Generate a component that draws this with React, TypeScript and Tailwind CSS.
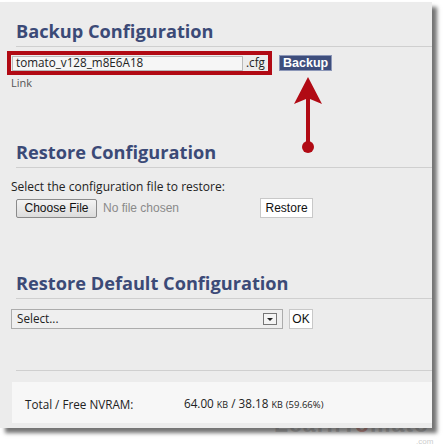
import React from "react";

const head = "font-['Open_Sans',sans-serif] font-bold text-[18.2px] leading-[24px] text-[#3b4a77]";
const os = "font-['Open_Sans',sans-serif]";
const ar = "font-['Liberation_Sans',Arial,sans-serif]";

export default function App() {
  return (
    <div className="relative w-[447px] h-[445px] bg-white overflow-hidden">
      {/* watermark (behind the panel shadow) */}
      <div className={`absolute left-[274px] top-[417px] ${ar} font-bold text-[23px] leading-[14px] tracking-[1px] text-[#cfcfcf] opacity-80`}>
        LearnT<span className="text-[#e5a097]">o</span>mato
      </div>
      <div className={`absolute left-[416px] top-[438px] ${ar} text-[8px] leading-[8px] text-[#cdcdcd]`}>.com</div>

      <div className={`relative mt-[2px] w-[432px] h-[426px] bg-[#ececec] shadow-[5px_5px_4px_rgba(0,0,0,0.55)] ${os}`}>
        {/* Backup */}
        <div className="pt-[17px] ml-[16px] border-b border-[#cfcfcf] pb-[3px]">
          <div className={head}>Backup Configuration</div>
        </div>
        <div className="flex items-center mt-[4px] ml-[7px]">
          <div className="flex items-center border-[4px] border-[#b10a14] h-[24px] w-[265px] pl-[1px]">
            <div className="w-[231px] h-[15px] bg-[#f6f6f6] border border-[#b9b9b9] flex items-center pl-[3px] text-[11.7px] text-[#222]">
              tomato_v128_m8E6A18
            </div>
            <span className="ml-[3px] text-[11.7px] text-[#222]">.cfg</span>
          </div>
          <button className={`ml-[7px] h-[16px] px-[3px] bg-[#3e4e7c] border border-[#8c97b8] text-white text-[12.5px] font-bold leading-[14px] ${ar}`}>
            Backup
          </button>
        </div>
        <div className="ml-[11px] mt-[1px] text-[11px] leading-[13px] text-[#555]">Link</div>

        {/* Restore */}
        <div className="mt-[51px] ml-[16px] border-b border-[#cfcfcf] pb-[3px]">
          <div className={head}>Restore Configuration</div>
        </div>
        <div className="ml-[11px] mt-[11px] text-[12px] leading-[16px] text-[#222]">
          Select the configuration file to restore:
        </div>
        <div className={`flex items-center mt-[3px] ml-[16px] ${ar}`}>
          <button className="h-[19px] w-[81px] rounded-[2px] border border-[#8a8a8a] bg-gradient-to-b from-[#f4f4f4] to-[#dcdcdc] text-[12px] text-[#111] leading-[17px]">
            Choose File
          </button>
          <span className="ml-[6px] text-[12px] text-[#8a8a8a]">No file chosen</span>
          <button className="ml-[81px] h-[20px] w-[53px] bg-white border border-[#c8c8c8] text-[12px] text-[#111] leading-[18px]">
            Restore
          </button>
        </div>

        {/* Default */}
        <div className="mt-[53px] ml-[16px] border-b border-[#cfcfcf] pb-[3px]">
          <div className={head}>Restore Default Configuration</div>
        </div>
        <div className="flex items-center mt-[10px] ml-[11px]">
          <div className="relative w-[272px] h-[20px] bg-[#efefef] border border-[#acacac] flex items-center pl-[5px] text-[11.7px] text-[#222]">
            Select...
            <div className="absolute right-[5px] top-[3px] w-[14px] h-[12px] border border-[#777] bg-[#f4f4f4] flex items-center justify-center">
              <div className="w-0 h-0 border-l-[3px] border-r-[3px] border-t-[3px] border-l-transparent border-r-transparent border-t-[#222]" />
            </div>
          </div>
          <button className={`ml-[6px] h-[20px] w-[24px] bg-white border border-[#c8c8c8] text-[12px] text-[#111] leading-[18px] ${ar}`}>
            OK
          </button>
        </div>

        {/* divider + footer */}
        <div className="mt-[41px] ml-[16px] border-b border-[#cfcfcf]" />
        <div className="mt-[11px] ml-[12px] h-[41px] bg-[#f7f7f7] flex items-center pt-[2px] text-[11.7px] leading-[16px] text-[#222]">
          <span className="ml-[13px] w-[159px]">Total / Free NVRAM:</span>
          <span>
            64.00 <span className="text-[9px]">KB</span> / 38.18 <span className="text-[9px]">KB</span>{" "}
            <span className="text-[9.5px]">(59.66%)</span>
          </span>
        </div>

        {/* arrow annotation */}
        <svg className="absolute left-[292px] top-[75px]" width="32" height="82" viewBox="0 0 32 82">
          <path d="M16 0 L30 27 L18 22 L18 70 L14 70 L14 22 L2 27 Z" fill="#b10a14" />
          <circle cx="16" cy="70" r="6" fill="#b10a14" />
        </svg>
      </div>
    </div>
  );
}
